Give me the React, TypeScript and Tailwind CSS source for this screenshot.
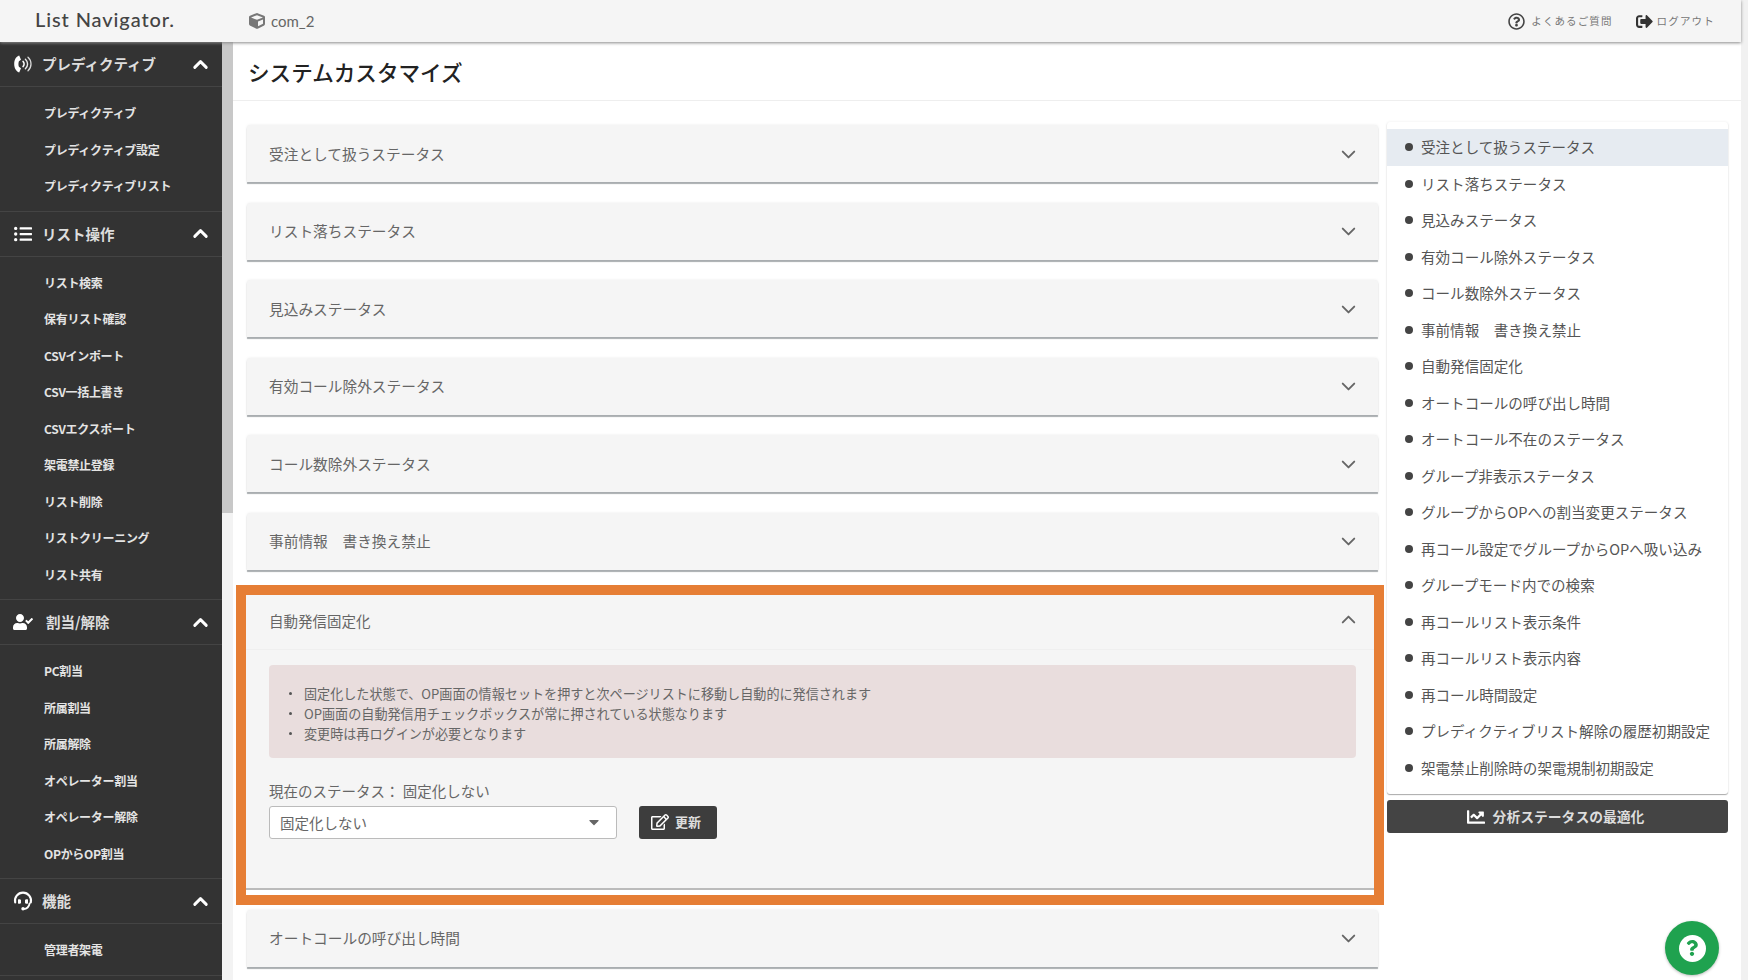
import React from "react";
import { FaListUl, FaUserCheck, FaCube, FaRegQuestionCircle, FaSignOutAlt, FaChartLine, FaRegEdit, FaCaretDown, FaQuestion } from "react-icons/fa";
import { ChevronDown, ChevronUp } from "lucide-react";

const jp = "font-['Noto_Sans_CJK_JP','Noto_Sans',sans-serif]";

function PredictiveIcon() {
  return (
    <svg width="20" height="20" viewBox="0 0 20 20" fill="none">
      <path d="M6.2 1.6 C3 2.6 1.2 6 1.2 10 C1.2 14 3 17.4 6.2 18.4 L8 14.2 L5.9 12.8 C5.3 11 5.3 9 5.9 7.2 L8 5.8 Z" fill="#fff" />
      <path d="M10 7.4 A3.6 3.6 0 0 1 10 12.6" stroke="#fff" strokeWidth="1.5" strokeLinecap="round" />
      <path d="M12.4 5.2 A6.4 6.4 0 0 1 12.4 14.8" stroke="#e8e8e8" strokeWidth="1.4" strokeLinecap="round" />
      <path d="M15 3.2 A9.2 9.2 0 0 1 15 16.8" stroke="#d8d8d8" strokeWidth="1.3" strokeLinecap="round" />
    </svg>
  );
}

function HeadsetIcon() {
  return (
    <svg width="20" height="20" viewBox="0 0 20 20" fill="none">
      <path d="M2.2 12.4 A8 8 0 1 1 17.8 12.4" stroke="#fff" strokeWidth="2.1" strokeLinecap="round" transform="translate(0 -1)" />
      <path d="M5 8.6 C6.6 7.9 7.6 8.2 8 9 V12 C7.6 12.8 6.6 13 5 12.4 Z" fill="#fff" />
      <path d="M15 8.6 C13.4 7.9 12.4 8.2 12 9 V12 C12.4 12.8 13.4 13 15 12.4 Z" fill="#fff" />
      <path d="M16.6 12.4 C16 16 14 18 10.6 18" stroke="#fff" strokeWidth="1.9" strokeLinecap="round" />
      <circle cx="10" cy="17.8" r="1.7" fill="#fff" />
    </svg>
  );
}

const sections = [
  { icon: <PredictiveIcon />, title: "プレディクティブ", items: ["プレディクティブ", "プレディクティブ設定", "プレディクティブリスト"] },
  { icon: <FaListUl className="text-[18px]" />, title: "リスト操作", items: ["リスト検索", "保有リスト確認", "CSVインポート", "CSV一括上書き", "CSVエクスポート", "架電禁止登録", "リスト削除", "リストクリーニング", "リスト共有"] },
  { icon: <FaUserCheck className="text-[22px]" />, title: "割当/解除", wide: true, items: ["PC割当", "所属割当", "所属解除", "オペレーター割当", "オペレーター解除", "OPからOP割当"] },
  { icon: <HeadsetIcon />, title: "機能", items: ["管理者架電"] },
];

const navItems = ["受注として扱うステータス", "リスト落ちステータス", "見込みステータス", "有効コール除外ステータス", "コール数除外ステータス", "事前情報　書き換え禁止", "自動発信固定化", "オートコールの呼び出し時間", "オートコール不在のステータス", "グループ非表示ステータス", "グループからOPへの割当変更ステータス", "再コール設定でグループからOPへ吸い込み", "グループモード内での検索", "再コールリスト表示条件", "再コールリスト表示内容", "再コール時間設定", "プレディクティブリスト解除の履歴初期設定", "架電禁止削除時の架電規制初期設定"];

const closedTop = ["受注として扱うステータス", "リスト落ちステータス", "見込みステータス", "有効コール除外ステータス", "コール数除外ステータス", "事前情報　書き換え禁止"];

function Closed({ label }: { label: string }) {
  return (
    <div className="ml-[11px] w-[1131px] h-[57px] mb-[20.5px] flex items-center justify-between pl-[22px] pr-[18px] pt-[1px] bg-[#f5f5f5] rounded-t-[3px] shadow-[0_2px_1px_-0.5px_#a9adb0,0_0_3px_#ececec] shrink-0">
      <span className="text-[14.7px] text-[#666]">{label}</span>
      <ChevronDown size={23} strokeWidth={2} className="text-[#666]" />
    </div>
  );
}

export default function App() {
  return (
    <div className={`${jp} relative flex w-[1748px] h-[980px] overflow-hidden bg-white`}>
      <div className="flex flex-col w-[1741px] h-full">
        <header className="relative z-10 h-[42px] shrink-0 flex items-center bg-[#f5f5f5] shadow-[0_1px_3px_#888]">
          <div className="w-[249px] pl-[35px] shrink-0 font-['Lato',sans-serif] font-medium text-[20px] tracking-[0.9px] text-[#444] -translate-y-[2px]">List Navigator.</div>
          <FaCube className="text-[16px] text-[#777] shrink-0" />
          <span className="ml-[6px] font-['Lato',sans-serif] text-[15px] text-[#666]">com_2</span>
          <div className="ml-auto flex items-center pr-[26px] text-[#777]">
            <FaRegQuestionCircle className="text-[17px] text-[#444]" />
            <span className="ml-[6px] text-[10.5px] tracking-[1.1px]">よくあるご質問</span>
            <FaSignOutAlt className="ml-[23px] text-[17px] text-[#333]" />
            <span className="ml-[4px] text-[10.5px] tracking-[1.2px]">ログアウト</span>
          </div>
        </header>
        <div className="flex flex-1 min-h-0">
          <aside className="w-[222px] shrink-0 bg-[#333] text-[#eee] overflow-hidden">
            {sections.map((s) => (
              <section key={s.title} className="border-b border-[#444]">
                <div className="h-[45px] flex items-center border-b border-[#444] pl-[13px] pr-[10px]">
                  <span className="w-[20px] flex justify-center shrink-0 text-white">{s.icon}</span>
                  <span className={`${s.wide ? "ml-[13px]" : "ml-[9px]"} text-[14.5px] font-bold text-[#ddd]`}>{s.title}</span>
                  <ChevronUp size={23} strokeWidth={3} className="ml-auto text-white" />
                </div>
                <ul className="pt-[8px] pb-[6px]">
                  {s.items.map((it) => (
                    <li key={it} className="h-[36.5px] flex items-center pl-[44px] text-[12px] font-bold tracking-[-0.3px] text-[#e4e4e4]">{it}</li>
                  ))}
                </ul>
              </section>
            ))}
          </aside>
          <div className="w-[11px] shrink-0 flex flex-col bg-[#f3f3f3]">
            <div className="h-[471px] bg-[#c8c8c8]" />
          </div>
          <main className="flex-1 min-w-0 flex flex-col">
            <div className="h-[59px] shrink-0 border-b border-[#eee] flex items-center pl-[15px] pt-[3px]">
              <h1 className="text-[21.6px] font-medium text-[#222]">システムカスタマイズ</h1>
            </div>
            <div className="flex flex-1 min-h-0 pt-[24px] pl-[3px]">
              <div className="w-[1148px] shrink-0 flex flex-col">
                {closedTop.map((l) => <Closed key={l} label={l} />)}
                <div className="-mt-[5.5px] mb-[5px] h-[320px] shrink-0 border-[10px] border-[#e67e35] bg-white overflow-hidden">
                  <div className="h-[295px] bg-[#f5f5f5] border-b-2 border-[#bbb] flex flex-col">
                    <div className="h-[55px] shrink-0 flex items-center justify-between pl-[23px] pr-[14px] border-b border-[#efefef]">
                      <span className="text-[14.5px] text-[#666] -translate-y-[1px]">自動発信固定化</span>
                      <ChevronUp size={23} strokeWidth={2} className="text-[#666] -translate-y-[2px]" />
                    </div>
                    <div className="pt-[15px] pl-[23px] pr-[18px]">
                      <ul className="bg-[#e9dddd] rounded-[4px] pt-[19px] pb-[14px] pl-[20px] text-[13.1px] leading-[20px] text-[#666]">
                        {["固定化した状態で、OP画面の情報セットを押すと次ページリストに移動し自動的に発信されます", "OP画面の自動発信用チェックボックスが常に押されている状態なります", "変更時は再ログインが必要となります"].map((t) => (
                          <li key={t} className="flex items-center">
                            <span className="w-[3px] h-[3px] rounded-full bg-[#555] mr-[12px] shrink-0" />
                            {t}
                          </li>
                        ))}
                      </ul>
                      <div className="mt-[22px] text-[14.5px] leading-[22px] text-[#666]">現在のステータス： 固定化しない</div>
                      <div className="mt-[4px] flex items-stretch">
                        <div className="w-[348px] h-[33px] bg-white border border-[#bbb] rounded-[3px] flex items-center justify-between pl-[10px] pr-[14px] text-[14.5px] text-[#666]">
                          <span className="translate-y-[1px]">固定化しない</span>
                          <FaCaretDown className="text-[#666] text-[16px]" />
                        </div>
                        <button className="ml-[22px] w-[78px] h-[33px] pr-[4px] bg-[#3d3d3d] rounded-[3px] flex items-center justify-center text-[13px] font-bold text-[#ddd]">
                          <FaRegEdit className="text-[18px] text-white mr-[6px]" />更新
                        </button>
                      </div>
                    </div>
                  </div>
                </div>
                <Closed label="オートコールの呼び出し時間" />
              </div>
              <div className="w-[341px] ml-[3px] shrink-0 flex flex-col -mt-[3px]">
                <nav className="bg-white pt-[7px] pb-[8px] rounded-[3px] shadow-[0_1px_1px_#aaa,0_0_3px_#eee]">
                  {navItems.map((n, i) => (
                    <div key={n} className={`h-[36.5px] flex items-center pl-[18px] text-[14.55px] text-[#555] ${i === 0 ? "bg-[#e6ebf1]" : ""}`}>
                      <span className="w-[8px] h-[8px] rounded-full bg-[#444] mr-[8px] shrink-0" />
                      {n}
                    </div>
                  ))}
                </nav>
                <button className="mt-[6px] h-[33px] pr-[4px] bg-[#444] rounded-[3px] flex items-center justify-center text-[13.8px] font-bold text-[#ddd]">
                  <FaChartLine className="text-[18px] text-white mr-[8px]" />分析ステータスの最適化
                </button>
              </div>
            </div>
          </main>
        </div>
      </div>
      <div className="w-[7px] shrink-0 bg-[#f1f1f1]" />
      <button className="absolute left-[1665px] top-[921px] w-[54px] h-[54px] rounded-full bg-[#1fa24f] shadow-[0_1px_3px_#bbb] flex items-center justify-center">
        <span className="w-[27px] h-[27px] rounded-full bg-white flex items-center justify-center">
          <FaQuestion className="text-[16px] text-[#1fa24f]" />
        </span>
      </button>
    </div>
  );
}
